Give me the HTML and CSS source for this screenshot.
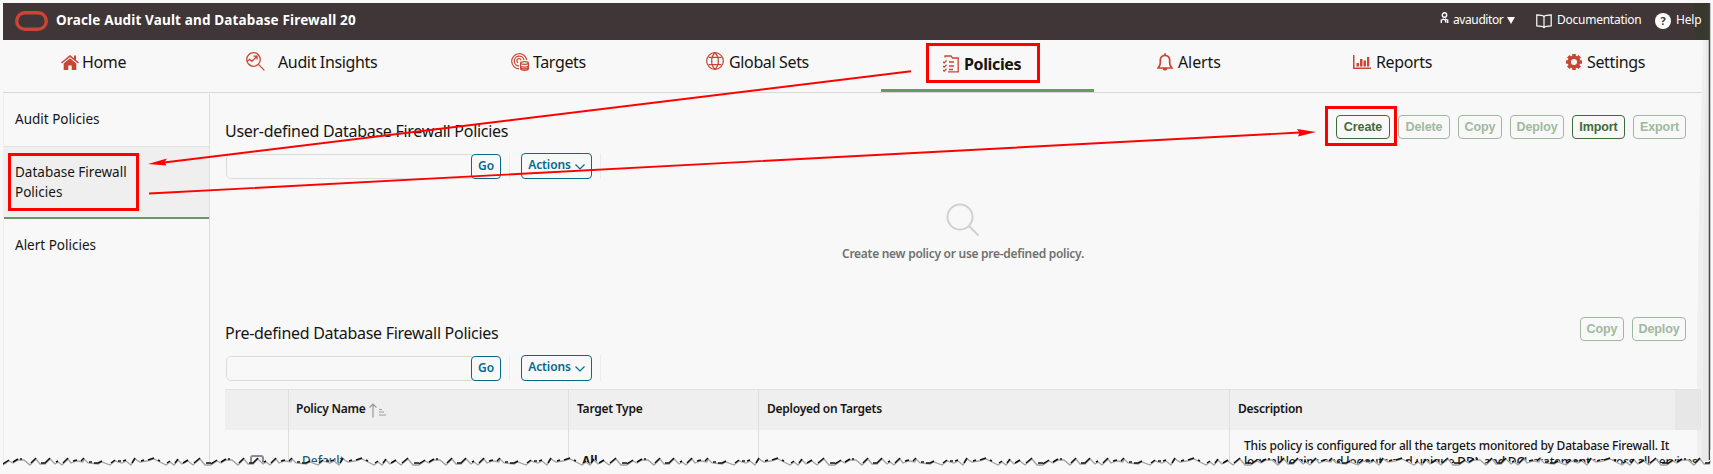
FILE: index.html
```html
<!DOCTYPE html>
<html lang="en">
<head>
<meta charset="utf-8">
<title>Oracle Audit Vault and Database Firewall 20</title>
<link rel="stylesheet" href="styles.css">
</head>
<body>
<div class="app">
  <header class="topbar">
    <svg class="logo" width="33" height="20" viewBox="0 0 33 20"><rect x="1.7" y="1.7" width="29.6" height="16.6" rx="8.3" fill="none" stroke="#c74634" stroke-width="3.4"/></svg>
    <h1 class="product">Oracle Audit Vault and Database Firewall 20</h1>
    <div class="links">
      <span class="link user"><svg width="9" height="12" viewBox="0 0 9 12" fill="none" stroke="#fff" stroke-width="1.4"><circle cx="4.5" cy="3" r="2.2"/><path d="M1.3 11V8.2L4 6.8M5 6.8l2.7 1.4V11M4.6 7l1.6 3.6"/></svg><span class="t-user">avauditor</span><i class="caret"></i></span>
      <span class="link docs"><svg width="16" height="15" viewBox="0 0 16 15" fill="none" stroke="#fff" stroke-width="1.2"><path d="M8 2.5C6.500 1 4 .8.8.8v11c3 0 5.700.3 7.200 1.700 1.500-1.400 4.200-1.700 7.200-1.700V.8C12 .8 9.500 1 8 2.500v11"/></svg><span class="t-docs">Documentation</span></span>
      <span class="link help"><i class="q">?</i><span class="t-help">Help</span></span>
    </div>
  </header>
  <nav class="tabs">
    <a class="tab home"><svg width="18" height="15" viewBox="0 0 18 15" fill="#c74634"><path d="M9 0 0 7.500l1 1.100L9 2l8 6.600 1-1.100-3-2.500V.6h-2v2.700z"/><path d="M9 3.200 2.700 8.500V15h4.600v-4.500h3.400V15h4.600V8.500z"/></svg><span>Home</span></a>
    <a class="tab insights"><svg width="19" height="19" viewBox="0 0 19 19" fill="none" stroke="#c74634" stroke-width="1.300"><circle cx="7.500" cy="7.500" r="6.800"/><path d="m12.400 12.400 6 6M1 9.600l2.800-2.300 2 2 2-1.800 3-3.200M7.500 4.200h3.600v3.400"/></svg><span>Audit Insights</span></a>
    <a class="tab targets"><svg width="18" height="18" viewBox="0 0 18 18" fill="none" stroke="#c74634" stroke-width="1.200"><path d="M8 15.900A7.600 7.600 0 1 1 15.800 7M8 12.900A4.900 4.900 0 1 1 13 7M7 9.600A2.100 2.100 0 1 1 10 7.400"/><ellipse cx="13.500" cy="10" rx="3.900" ry="1.300"/><path d="M9.600 10v5.800c0 2 7.800 2 7.800 0V10M9.600 12.600c0 2 7.800 2 7.800 0M9.600 14.600c0 1.700 7.800 1.700 7.800 0"/></svg><span>Targets</span></a>
    <a class="tab global"><svg width="18" height="18" viewBox="0 0 18 18" fill="none" stroke="#c74634" stroke-width="1.200"><circle cx="9" cy="9" r="8.300"/><path d="M9 .7C4.500 5 4.500 13 9 17.300M9 .7c4.500 4.300 4.500 12.300 0 16.600M2.500 5.300h13M2.500 12.700h13M5.800 5.300v7.400M12.200 5.300v7.400"/></svg><span>Global Sets</span></a>
    <a class="tab policies"><svg width="16" height="18" viewBox="0 0 16 18" fill="none" stroke="#c74634" stroke-width="1.300"><path d="M2 2.500V1h6l1.500 2h5.700v13.800H5M0 6.800l1.200 1.100L3.500 5.500M0 11l1.200 1.100 2.300-2.400M0 15l1.200 1.100 2.300-2.400M6 7h5M6 11h5M6 14.500h4"/></svg><span>Policies</span></a>
    <a class="tab alerts"><svg width="16" height="18" viewBox="0 0 16 18" fill="none" stroke="#c74634" stroke-width="1.700"><path d="M8 .3v1.500M1 15h14c-1.500-1.500-2.300-3-2.300-5V7A4.700 4.700 0 0 0 3.300 7v3c0 2-.8 3.500-2.300 5zM6.500 15.700c.3 1.300 2.700 1.300 3 0"/></svg><span>Alerts</span></a>
    <a class="tab reports"><svg width="18" height="14" viewBox="0 0 18 14" fill="#c74634"><path d="M0 0h1.500v12.500H18V14H0zM3.500 8H6v3.500H3.500zM7 4h2.500v7.500H7zM10.500 5.500H13v6h-2.500zM14 2h2.300v9.500H14z"/></svg><span>Reports</span></a>
    <a class="tab settings"><svg width="16" height="16" viewBox="0 0 16 16"><circle cx="8" cy="8" r="4.700" fill="none" stroke="#c74634" stroke-width="3.400"/><g stroke="#c74634" stroke-width="3.600"><path d="M8 0v3M8 13v3M0 8h3M13 8h3M2.300 2.300l2 2M11.700 11.700l2 2M2.300 13.700l2-2M11.700 4.300l2-2"/></g></svg><span>Settings</span></a>
  </nav>
  <div class="body">
    <aside class="side">
      <a class="item first"><span>Audit Policies</span></a>
      <a class="item current"><span>Database Firewall<br>Policies</span></a>
      <a class="item last"><span>Alert Policies</span></a>
    </aside>
    <main class="main">
      <section class="region user-defined">
        <div class="head"><h2>User-defined Database Firewall Policies</h2>
          <div class="buttons"><button class="btn create">Create</button><button class="btn off delete">Delete</button><button class="btn off copy">Copy</button><button class="btn off deploy">Deploy</button><button class="btn import">Import</button><button class="btn off export">Export</button></div>
        </div>
        <div class="search"><div class="field"></div><button class="go">Go</button><i class="sep"></i><button class="actions">Actions<svg width="10" height="6" viewBox="0 0 10 6" fill="none" stroke="#006b8f" stroke-width="1.200"><path d="m.5.5 4.500 4.500L9.500.5"/></svg></button><i class="sep"></i></div>
        <div class="empty"><svg width="34" height="34" viewBox="0 0 34 34" fill="none" stroke="#d0d1d0" stroke-width="2"><circle cx="14" cy="14" r="12.500"/><path d="m22.500 22.500 10 10"/></svg><p>Create new policy or use pre-defined policy.</p></div>
      </section>
      <section class="region">
        <div class="head"><h2>Pre-defined Database Firewall Policies</h2>
          <div class="buttons"><button class="btn off copy">Copy</button><button class="btn off deploy">Deploy</button></div>
        </div>
        <div class="search"><div class="field"></div><button class="go">Go</button><i class="sep"></i><button class="actions">Actions<svg width="10" height="6" viewBox="0 0 10 6" fill="none" stroke="#006b8f" stroke-width="1.200"><path d="m.5.5 4.500 4.500L9.500.5"/></svg></button><i class="sep"></i></div>
        <div class="grid">
          <div class="row th"><div></div><div><span>Policy Name</span><svg width="17" height="15" viewBox="0 0 17 15" fill="none" stroke="#999" stroke-width="1.200"><path d="M4 14.500V1M.5 4.500 4 1l3.500 3.500M10 6.500h3M10 9h5M10 12h7"/></svg></div><div><span>Target Type</span></div><div><span>Deployed on Targets</span></div><div><span>Description</span></div></div>
          <div class="row td"><div><i class="check"></i></div><div><span class="name">Default</span></div><div><b>All</b></div><div></div><div><p>This policy is configured for all the targets monitored by Database Firewall. It</p><p>logs all logins and logouts and unique DDL and DCL statements across all services.</p></div></div>
        </div>
      </section>
    </main>
  </div>
</div>
<svg class="overlay" width="1713" height="474" viewBox="0 0 1713 474">
  <defs>
    <pattern id="tear" x="3" y="456" width="208" height="18" patternUnits="userSpaceOnUse">
      <path d="M0 8 6 4 10 6 15 3 21 3 27 8 33 2 37 7 42 7 47 2 52 7 55 5 59 8 65 2 68 6 74 4 80 5 81 2 85 6 95 7 99 5 107 8 112 4 119 6 123 4 128 8 132 2 137 5 144 4 151 2 157 5 163 8 167 5 171 8 175 3 179 7 185 4 190 8 197 2 202 8 208 8V18H0z" fill="#f8f8f8"/>
      <path d="M0 9 6 5 10 7 15 4 21 4 27 9 33 3 37 8 42 8 47 3 52 8 55 6 59 9 65 3 68 7 74 5 80 6 81 3 85 7 95 8 99 6 107 9 112 5 119 7 123 5 128 9 132 3 137 6 144 5 151 3 157 6 163 9 167 6 171 9 175 4 179 8 185 5 190 9 197 3 202 9 208 9" fill="none" stroke="#a2a2a2" stroke-width="1.300"/>
      <path d="M0 8 6 4M10 6 15 3M17 3h2M28 7 33 2M38 7h4L47 2M53 6l2-1M60 7 65 2M70 5l4-1M78 5 81 2M86 6h3M91 7h4L99 5M108 7 112 4M115 5h3M120 5 123 4M129 7 132 2M138 5l3-1M145 4 151 2M155 4l2 1M164 7 167 5M172 7 175 3M180 7 185 4M191 7 197 2M203 7h5" fill="none" stroke="#111" stroke-width="1.500"/>
    </pattern>
  </defs>
  <path d="M1706 40h3v421h-7l1-205z" fill="#e9e9e9"/>
  <path d="M1703 40h3l-3 216-1 205h-5V430h3.500v-41H1697l1-133z" fill="#efefef"/>
  <path d="M1709.500 3v457" stroke="#454545" stroke-width="1.500"/>
  <rect x="0" y="456" width="1713" height="18" fill="url(#tear)"/>
  <path d="M0 450h3v24H0zM1710.300 450h3v24h-3z" fill="#f8f8f8"/>
  <g fill="none" stroke="#f00" stroke-width="3">
    <rect x="9.500" y="154.500" width="128" height="55"/>
    <rect x="927.500" y="44.500" width="111" height="37"/>
    <rect x="1326.500" y="107.500" width="69" height="37"/>
  </g>
  <g stroke="#f00" stroke-width="1.900" fill="#f00"><path d="M911 71.300 160 163M149 193.500 1300 132.500"/><path d="m148 164 19-5.500-2.500 3.500 2 3.500zM1316 132l-19-3 2.500 3.500-1.500 4z" stroke="none"/></g>
</svg>
</body>
</html>
```
FILE: styles.css
```css
* { box-sizing: border-box; }
body { margin: 0; width: 1713px; height: 474px; overflow: hidden; background: #f8f8f8; font-family: "Noto Sans", "Open Sans", sans-serif; color: #161513; padding: 3px; position: relative; }
h1, h2, p { margin: 0; font-weight: 400; }
span, h1, h2, p, button { white-space: nowrap; }
svg { flex: none; display: block; }
.app { width: 1706px; height: 471px; }
.topbar { height: 37px; background: linear-gradient(to right, #403637 99.1%, #38382f 99.1%); color: #fff; display: flex; align-items: center; padding: 0 0 3px 12px; }
.logo { margin-top: 1px; }
.product { font-size: 13.500px; font-weight: 700; letter-spacing: .15px; margin-left: 8px; }
.links { margin-left: auto; display: flex; font-size: 12px; }
.link { display: flex; align-items: center; height: 24px; padding-bottom: 2px; }
.user { width: 96px; }
.user svg { margin-right: 4px; margin-top: -3px; }
.t-user { width: 54px; letter-spacing: -.4px; }
.caret { border: 4.500px solid transparent; border-top: 7px solid #fff; border-bottom: 0; margin-top: 3px; }
.docs { width: 119px; }
.docs svg { margin-right: 5px; margin-top: 4px; }
.t-docs { letter-spacing: -.25px; }
.help { width: 54px; }
.t-help { letter-spacing: -.2px; }
.q { width: 16px; height: 16px; border-radius: 50%; background: #fff; color: #403637; font: 700 11px/16px "Noto Sans", sans-serif; text-align: center; margin-right: 5px; margin-top: 3px; }
.tabs { height: 53px; display: grid; grid-template-columns: 202px 243px 216px 217px 213px 209px 210px 196px; border-bottom: 1px solid #d8d8d8; font-size: 16px; letter-spacing: -.36px; }
.tab { display: flex; align-items: flex-start; height: 52px; }
.tab span { line-height: 22px; margin-top: 11px; }
.tab svg { margin-top: 12px; }
.home { padding-left: 58px; } .home svg { margin: 15px 3px 0 0; }
.insights { padding-left: 41px; } .insights svg { margin-right: 13px; }
.targets { padding-left: 63px; } .targets svg { margin: 13px 4px 0 0; }
.global { padding-left: 42px; } .global svg { margin-right: 5px; }
.policies { padding-left: 62px; border-bottom: 3px solid #669a62; font-weight: 700; } .policies svg { margin: 15px 5px 0 0; } .policies span { margin-top: 13px; }
.alerts { padding-left: 63px; letter-spacing: -.1px; } .alerts svg { margin: 13px 5px 0 0; }
.reports { padding-left: 50px; } .reports svg { margin: 15px 5px 0 0; }
.settings { padding-left: 53px; } .settings svg { margin: 14px 5px 0 0; }
.body { display: flex; height: 378px; }
.side { flex: none; width: 207px; border-left: 1px solid #eee; border-right: 1px solid #dcdcdc; font-size: 13.500px; line-height: 20px; margin-top: 1px; }
.item { display: block; padding-left: 11px; }
.first { height: 52px; padding-top: 15px; }
.current { height: 73px; padding-top: 15px; background: #efefef; border-top: 1px solid #e2e2e2; border-bottom: 2px solid #669a62; }
.last { padding-top: 16px; }
.main { flex: 1; padding: 0 6px 0 15px; }
.user-defined { height: 202px; }
.head { display: flex; justify-content: space-between; height: 60px; padding-top: 22px; padding-right: 17px; }
.head h2 { font-size: 16px; line-height: 22px; margin-top: 5px; letter-spacing: -.28px; }
.buttons { display: flex; gap: 8px; }
.btn, .go, .actions { font: 600 12px/1 "Noto Sans", sans-serif; border: 1px solid; border-radius: 4px; background: none; padding: 0 0 1px; letter-spacing: -.1px; }
.btn { height: 24px; color: #3e6b3c; font-family: "Liberation Sans", sans-serif; font-weight: 700; font-size: 12.500px; padding: 1px 0 0; }
.off { color: #a0b99e; }
.create { width: 54px; } .delete { width: 52px; } .copy { width: 44px; } .deploy { width: 54px; } .import { width: 53px; } .export { width: 53px; }
.search { display: flex; height: 26px; padding-left: 1px; align-items: flex-end; }
.field { width: 249px; height: 25px; border: 1px solid #dcdcdc; border-radius: 5px; margin-right: -4px; }
.go { width: 30px; height: 25px; color: #006b8f; background: #f8f8f8; padding-bottom: 2px; }
.actions { width: 71px; height: 26px; color: #006b8f; display: flex; align-items: center; justify-content: center; gap: 4px; padding-bottom: 2px; }
.actions svg { margin-top: 3px; }
.sep { width: 1px; height: 26px; background: #ececec; margin: 0 11px 0 8px; }
.empty { display: flex; flex-direction: column; align-items: center; padding-top: 24px; padding-right: 2px; }
.empty p { font-size: 12px; font-weight: 600; color: #70706e; line-height: 18px; margin-top: 8px; letter-spacing: -.28px; }
.grid { margin-top: 8px; width: 1476px; }
.row { display: grid; grid-template-columns: 63px 280px 190px 471px 1fr; }
.row > div { border-left: 1px solid #dedede; padding-left: 7px; }
.row > div:first-child { border-left: 0; }
.th { height: 41px; background: linear-gradient(to right, #efefef 1450px, #e7e7e7 1450px); border-top: 1px solid #e2e2e2; border-right: 1px solid #d4d4d4; font-size: 12px; font-weight: 600; letter-spacing: -.25px; }
.th > div { display: flex; align-items: center; gap: 3px; padding-bottom: 3px; }
.th > div:nth-child(n+3) { padding-left: 8px; }
.th svg { margin-top: 4px; }
.td { height: 54px; font-size: 12px; font-weight: 500; border-right: 1px solid #e2e2e2; }
.td > div { padding: 22px 0 0 13px; line-height: 18px; }
.td > div:last-child { padding: 8px 0 0 14px; line-height: 16px; }
.td p { font-weight: 500; letter-spacing: -.19px; }
.name { color: #1a5878; }
.check { display: block; margin: 3px 0 0 12px; width: 14px; height: 14px; border: 2px solid #8b8a9c; border-radius: 3px; }
.overlay { position: absolute; left: 0; top: 0; pointer-events: none; }
```
